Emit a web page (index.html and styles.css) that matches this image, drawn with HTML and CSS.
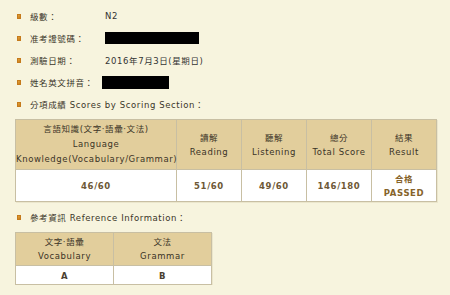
FILE: index.html
```html
<!DOCTYPE html>
<html lang="zh-Hant">
<head>
<meta charset="utf-8">
<title>成績</title>
<link rel="stylesheet" href="styles.css">
</head>
<body>
<div class="page">
  <div class="row"><span class="bullet"></span><span class="label">級數：</span><span class="value">N2</span></div>
  <div class="row"><span class="bullet"></span><span class="label">准考證號碼：</span><span class="redact redact-id"></span></div>
  <div class="row"><span class="bullet"></span><span class="label">測驗日期：</span><span class="value">2016年7月3日(星期日)</span></div>
  <div class="row"><span class="bullet"></span><span class="label">姓名英文拼音：</span><span class="redact redact-name"></span></div>
  <div class="row"><span class="bullet"></span><span class="heading">分項成績 Scores by Scoring Section：</span></div>
  <table class="scores">
    <colgroup><col class="c1"><col class="c2"><col class="c2"><col class="c2"><col class="c2"></colgroup>
    <thead>
      <tr>
        <th class="tall">言語知識(文字‧語彙‧文法)<br>Language<br>Knowledge(Vocabulary/Grammar)</th>
        <th>讀解<br>Reading</th>
        <th>聽解<br>Listening</th>
        <th>總分<br>Total Score</th>
        <th>結果<br>Result</th>
      </tr>
    </thead>
    <tbody>
      <tr>
        <td>46/60</td>
        <td>51/60</td>
        <td>49/60</td>
        <td>146/180</td>
        <td class="pass">合格<br>PASSED</td>
      </tr>
    </tbody>
  </table>
  <div class="row row-gap"><span class="bullet"></span><span class="heading">參考資訊 Reference Information：</span></div>
  <table class="ref">
    <colgroup><col class="r1"><col class="r1"></colgroup>
    <thead>
      <tr>
        <th>文字‧語彙<br>Vocabulary</th>
        <th>文法<br>Grammar</th>
      </tr>
    </thead>
    <tbody>
      <tr>
        <td class="grade">A</td>
        <td class="grade">B</td>
      </tr>
    </tbody>
  </table>
</div>
</body>
</html>
```

FILE: styles.css
```css
html, body {
  margin: 0;
  padding: 0;
  background: #f7f4de;
}
body {
  font-family: "DejaVu Sans", "Noto Sans CJK TC", sans-serif;
  font-size: 8.5px;
  color: #3a3528;
  letter-spacing: 0.6px;
}
.page {
  padding: 5px 0 0 15px;
}
.row {
  display: flex;
  align-items: center;
  height: 22px;
}
.row-gap {
  margin-top: 4px;
}
.bullet {
  width: 4px;
  height: 5px;
  margin-left: 2px;
  margin-right: 9px;
  background: linear-gradient(135deg, #f0b040, #b86c14);
  box-shadow: inset 0 0 0 1px #c57a1c;
}
.label {
  width: 75px;
  flex: none;
}
.value {
  color: #333;
}
.redact {
  display: block;
  background: #000;
}
.redact-id {
  width: 94px;
  height: 12px;
}
.redact-name {
  width: 67px;
  height: 13px;
  margin-left: -3px;
}
table {
  border-collapse: collapse;
  table-layout: fixed;
  margin-top: 4px;
  box-shadow: 1px 1px 0 #ebe6cc;
}
.scores { width: 422px; }
.ref { width: 196px; }
col.c1 { width: 161px; }
col.c2 { width: 65px; }
col.r1 { width: 98px; }
th, td {
  border: 1px solid #c8bfa3;
  text-align: center;
  padding: 2px 0;
  line-height: 14px;
}
th {
  background: #e2ce9c;
  font-weight: normal;
  color: #3a3326;
  height: 29px;
}
th.tall {
  line-height: 15px;
}
td {
  background: #fff;
  color: #6e5836;
  font-weight: bold;
  height: 28px;
  padding: 2px 0 1px;
}
td.pass {
  color: #86632a;
}
.ref th {
  height: 28px;
}
td.grade {
  height: 15px;
  color: #4a3f30;
}
```
